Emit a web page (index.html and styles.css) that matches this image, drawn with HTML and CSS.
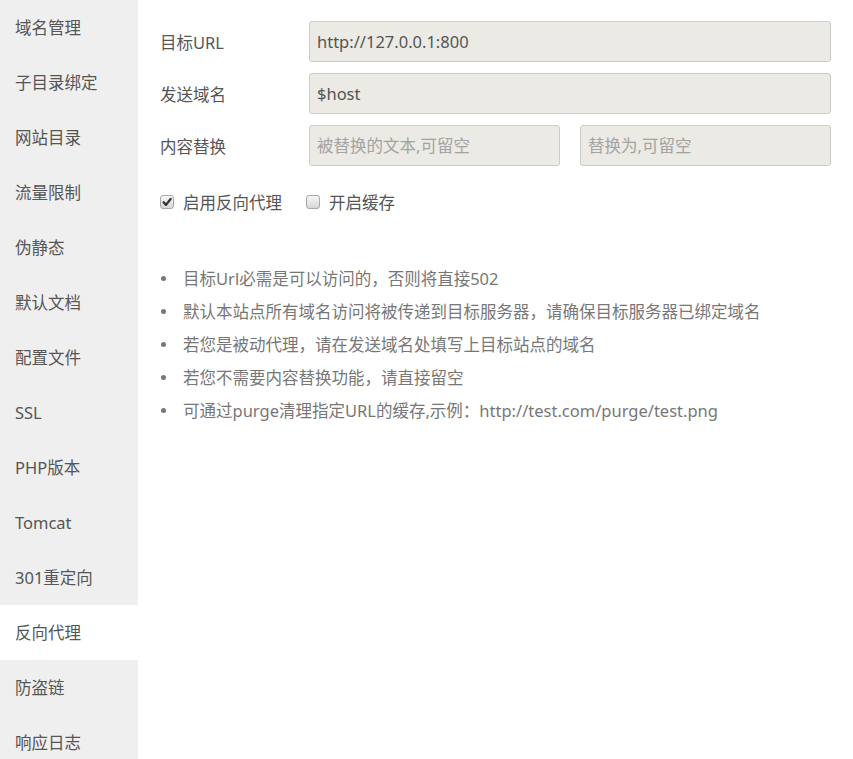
FILE: index.html
```html
<!DOCTYPE html>
<html lang="zh-CN">
<head>
<meta charset="utf-8">
<title>反向代理</title>
<link rel="stylesheet" href="styles.css">
</head>
<body>
<div class="page">
  <nav class="sidebar">
    <div class="nav-item">域名管理</div>
    <div class="nav-item">子目录绑定</div>
    <div class="nav-item">网站目录</div>
    <div class="nav-item">流量限制</div>
    <div class="nav-item">伪静态</div>
    <div class="nav-item">默认文档</div>
    <div class="nav-item">配置文件</div>
    <div class="nav-item">SSL</div>
    <div class="nav-item">PHP版本</div>
    <div class="nav-item">Tomcat</div>
    <div class="nav-item">301重定向</div>
    <div class="nav-item active">反向代理</div>
    <div class="nav-item">防盗链</div>
    <div class="nav-item">响应日志</div>
  </nav>
  <main class="content">
    <div class="form-row">
      <span class="label">目标URL</span>
      <div class="field">http://127.0.0.1:800</div>
    </div>
    <div class="form-row">
      <span class="label">发送域名</span>
      <div class="field">$host</div>
    </div>
    <div class="form-row">
      <span class="label">内容替换</span>
      <div class="field-pair">
        <div class="field placeholder">被替换的文本,可留空</div>
        <div class="field placeholder">替换为,可留空</div>
      </div>
    </div>
    <div class="checks">
      <label class="check">
        <span class="box checked"><svg viewBox="0 0 14 14" width="14" height="14"><path d="M3.6 7.3 L6 9.9 L10.6 4" fill="none" stroke="#333" stroke-width="2.3" stroke-linecap="round" stroke-linejoin="round"/></svg></span>
        <span>启用反向代理</span>
      </label>
      <label class="check">
        <span class="box"></span>
        <span>开启缓存</span>
      </label>
    </div>
    <ul class="tips">
      <li>目标Url必需是可以访问的，否则将直接502</li>
      <li>默认本站点所有域名访问将被传递到目标服务器，请确保目标服务器已绑定域名</li>
      <li>若您是被动代理，请在发送域名处填写上目标站点的域名</li>
      <li>若您不需要内容替换功能，请直接留空</li>
      <li>可通过purge清理指定URL的缓存,示例：http://test.com/purge/test.png</li>
    </ul>
  </main>
</div>
</body>
</html>
```

FILE: styles.css
```css
html, body {
  margin: 0;
  padding: 0;
  background: #fff;
}
body {
  font-family: "Noto Sans", "Noto Sans CJK SC", sans-serif;
  font-size: 16.5px;
  color: #555;
}
.page {
  display: flex;
  min-height: 759px;
}
.sidebar {
  width: 138px;
  flex: none;
  background: #efefef;
  display: flex;
  flex-direction: column;
}
.nav-item {
  height: 55px;
  line-height: 55px;
  padding-left: 15px;
  color: #555;
  white-space: nowrap;
}
.nav-item.active {
  background: #fff;
}
.content {
  flex: 1;
  padding: 21px 22px 0 22px;
}
.form-row {
  display: flex;
  align-items: center;
  height: 41px;
  margin-bottom: 11px;
}
.label {
  width: 149px;
  flex: none;
  color: #555;
}
.field {
  flex: 1;
  height: 39px;
  line-height: 39px;
  border: 1px solid #ccc;
  border-radius: 3px;
  background: #ebeae4;
  padding-left: 7px;
  color: #555;
  box-sizing: content-box;
  white-space: nowrap;
  overflow: hidden;
}
.field.placeholder {
  color: #a3a3a3;
}
.field-pair {
  flex: 1;
  display: flex;
  gap: 20px;
}
.field-pair .field {
  flex: 1;
}
.checks {
  display: flex;
  align-items: center;
  gap: 24px;
  margin-top: 25px;
  height: 22px;
}
.check {
  display: flex;
  align-items: center;
  gap: 9px;
  color: #555;
}
.box {
  width: 12px;
  height: 12px;
  border: 1px solid #a8a8a8;
  border-radius: 3px;
  background: linear-gradient(#f6f6f6, #d6d6d6);
  display: inline-block;
  position: relative;
}
.box svg {
  position: absolute;
  left: -1px;
  top: -1px;
}
.tips {
  list-style: none;
  margin: 49px 0 0 0;
  padding: 0;
}
.tips li {
  position: relative;
  line-height: 33px;
  padding-left: 23px;
  color: #777;
  white-space: nowrap;
}
.tips li::before {
  content: "";
  position: absolute;
  left: 1px;
  top: 14px;
  width: 5px;
  height: 5px;
  border-radius: 50%;
  background: #777;
}
```
